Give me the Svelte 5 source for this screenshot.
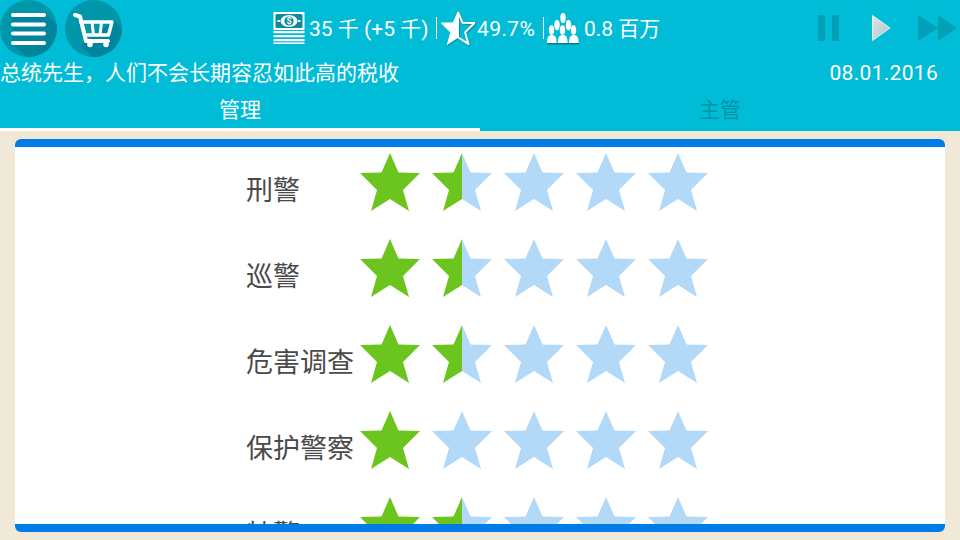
<script>
  const rows = [
    { name: '刑警', v: [2, 1, 0, 0, 0] },
    { name: '巡警', v: [2, 1, 0, 0, 0] },
    { name: '危害调查', v: [2, 1, 0, 0, 0] },
    { name: '保护警察', v: [2, 0, 0, 0, 0] },
    { name: '特警', v: [2, 1, 0, 0, 0] }
  ];
  const leftHalf = '30,0 21.5,19.500 0,20 17,37 11,58 30,46';
  const rightHalf = '30,0 38.5,19.500 60,20 43,37 49,58 30,46';
  const green = '#6CC51F';
  const blue = '#B3D9F9';
</script>

<div class="page">
  <header class="top">
    <div class="bar">
      <div class="round">
        <svg width="57" height="57" viewBox="0 0 57 57" aria-label="菜单">
          <defs><clipPath id="c1"><circle cx="28.5" cy="28.5" r="28.5" /></clipPath></defs>
          <circle cx="28.5" cy="28.5" r="28.5" fill="#0097AB" />
          <polygon clip-path="url(#c1)" points="12,17 45,13 70,38 70,70 40,70 12,44" fill="#00859B" />
          <g fill="#fff">
            <rect x="11" y="13" width="35" height="4" rx="2" />
            <rect x="11" y="22.500" width="35" height="4" rx="2" />
            <rect x="11" y="31.500" width="35" height="4" rx="2" />
            <rect x="11" y="41" width="35" height="4" rx="2" />
          </g>
        </svg>
        <svg width="57" height="57" viewBox="0 0 57 57" aria-label="商店">
          <defs><clipPath id="c2"><circle cx="28.5" cy="28.5" r="28.5" /></clipPath></defs>
          <circle cx="28.5" cy="28.5" r="28.5" fill="#0097AB" />
          <polygon clip-path="url(#c2)" points="20,42 49,21 75,45 60,70 40,70 16,46" fill="#00859B" />
          <path d="M10 15l5 1.500 6 24.500h22" fill="none" stroke="#fff" stroke-width="4" stroke-linecap="round" stroke-linejoin="round" />
          <path d="M16 22h31l-3.500 13H20z" fill="none" stroke="#fff" stroke-width="3.400" stroke-linejoin="round" />
          <path d="M27 22l1.500 13M36.500 22l-1.500 13" stroke="#fff" stroke-width="3" />
          <circle cx="25" cy="44.500" r="2.800" fill="#fff" />
          <circle cx="41" cy="44.500" r="2.800" fill="#fff" />
        </svg>
      </div>

      <div class="stats">
        <svg class="money" width="32" height="32" viewBox="0 0 32 32" aria-hidden="true">
          <rect x="0.5" y="0" width="31" height="18" fill="#fff" />
          <rect x="2.5" y="2" width="27" height="14" rx="1.500" fill="#0A8C9E" />
          <ellipse cx="16" cy="9" rx="8.500" ry="6" fill="#fff" />
          <circle cx="16" cy="9" r="4.600" fill="#0A8C9E" />
          <rect x="4.500" y="8" width="2.500" height="2" fill="#fff" />
          <rect x="25" y="8" width="2.500" height="2" fill="#fff" />
          <text x="16" y="12" text-anchor="middle" class="dollar">$</text>
          <g fill="#fff">
            <rect x="0.5" y="19" width="31" height="2.200" />
            <rect x="0.5" y="23" width="31" height="2.200" />
            <rect x="0.5" y="27" width="31" height="2.200" />
            <rect x="0.5" y="30.400" width="31" height="1.600" />
          </g>
        </svg>
        <span class="stat s1">35 千 (+5 千)</span>
        <i class="sep"></i>
        <svg class="approve" width="34" height="34" viewBox="-1 -1 62 60" aria-hidden="true">
          <polygon points={leftHalf} fill="#fff" />
          <polygon points={rightHalf} fill="none" stroke="#fff" stroke-width="3.600" stroke-linejoin="miter" />
          <polygon points={leftHalf} fill="none" stroke="#fff" stroke-width="2" />
        </svg>
        <span class="stat s2">49.7%</span>
        <i class="sep"></i>
        <svg class="people" width="33" height="32" viewBox="0 0 33 32" aria-hidden="true">
          <g fill="#fff">
            <ellipse cx="16" cy="5" rx="2.700" ry="5" />
            <ellipse cx="10" cy="12" rx="2.700" ry="5.300" />
            <ellipse cx="21.500" cy="12" rx="2.700" ry="5.300" />
            <ellipse cx="4.500" cy="17" rx="2.700" ry="4.800" />
            <ellipse cx="15.500" cy="17" rx="2.700" ry="4.800" />
            <ellipse cx="26.500" cy="17" rx="2.700" ry="4.800" />
            <path d="M0 30c0-6 1.500-8 4.800-8s4.800 2 4.800 8z" />
            <path d="M11 30c0-6 1.500-8 4.800-8s4.800 2 4.800 8z" />
            <path d="M22 30c0-6 1.500-8 4.800-8s4.800 2 4.800 8z" />
          </g>
          <rect x="0" y="30" width="32" height="1.500" fill="#067C8E" />
        </svg>
        <span class="stat s3">0.8 百万</span>
      </div>

      <div class="speed">
        <svg width="22" height="26" viewBox="0 0 22 26" aria-label="暂停">
          <rect width="7" height="26" fill="#00A0B6" />
          <rect x="14" width="7" height="26" fill="#00A0B6" />
        </svg>
        <svg width="19" height="26" viewBox="0 0 19 26" aria-label="播放">
          <defs>
            <linearGradient id="pl" x1="0" y1="0" x2="1" y2="1">
              <stop offset="0" stop-color="#DDE7E9" />
              <stop offset="1" stop-color="#A9C4C9" />
            </linearGradient>
          </defs>
          <polygon points="0.500,0.500 18,13 0.500,25.500" fill="url(#pl)" stroke="#fff" stroke-width="0.800" />
        </svg>
        <svg class="fast" width="39" height="26" viewBox="0 0 39 26" aria-label="快进">
          <polygon points="0,0 20,13 0,26" fill="#00A0B6" />
          <polygon points="20,0 39,13 20,26" fill="#00A0B6" />
        </svg>
      </div>
    </div>

    <div class="notice">
      <span>总统先生，人们不会长期容忍如此高的税收</span>
      <span class="date">08.01.2016</span>
    </div>

    <nav class="tabs">
      <div class="tab active">管理</div>
      <div class="tab">主管</div>
    </nav>
  </header>

  <main class="card">
    <div class="list">
      {#each rows as row}
        <div class="row">
          <div class="label">{row.name}</div>
          <div class="stars">
            {#each row.v as s}
              <svg width="60" height="58" viewBox="0 0 60 58" aria-hidden="true">
                <polygon points={leftHalf} fill={s >= 1 ? green : blue} />
                <polygon points={rightHalf} fill={s >= 2 ? green : blue} />
              </svg>
            {/each}
          </div>
        </div>
      {/each}
    </div>
  </main>
</div>

<style>
  :global(body) {
    margin: 0;
    background: #f0e9d8;
  }
  .page {
    width: 960px;
    height: 540px;
    overflow: hidden;
    display: flex;
    flex-direction: column;
    background: #f0e9d8;
    font-family: Roboto, "Noto Sans CJK SC", sans-serif;
    color: #fff;
  }
  .top {
    height: 131px;
    flex: none;
    background: #00bcd6;
    display: flex;
    flex-direction: column;
  }
  .bar {
    height: 57px;
    flex: none;
    display: flex;
  }
  .round {
    width: 273px;
    flex: none;
    display: flex;
    gap: 8px;
    align-items: flex-start;
  }
  .round svg,
  .stats svg,
  .speed svg {
    display: block;
    flex: none;
  }
  .stats {
    width: 540px;
    flex: none;
    display: flex;
    align-items: center;
    height: 56px;
    font-size: 21px;
    line-height: 1;
    white-space: nowrap;
  }
  .dollar {
    font-size: 9px;
    font-weight: 700;
    fill: #fff;
  }
  .stat {
    display: block;
    padding-top: 3px;
  }
  .s1 {
    margin-left: 4px;
    width: 127px;
  }
  .s2 {
    margin-left: 2px;
    width: 66px;
    letter-spacing: 0.4px;
  }
  .s3 {
    margin-left: 4px;
  }
  .sep {
    display: block;
    width: 1px;
    height: 22px;
    background: #fff;
    flex: none;
  }
  .approve {
    margin-left: 4px;
    filter: drop-shadow(1px 1px 0 #0a8c9e);
  }
  .people {
    margin-left: 3px;
    margin-top: 2px;
  }
  .speed {
    flex: 1;
    display: flex;
    align-items: center;
    height: 56px;
    padding-left: 5px;
    gap: 32px;
  }
  .speed .fast {
    margin-left: -5px;
  }
  .notice {
    height: 31px;
    box-sizing: border-box;
    padding-top: 2px;
    flex: none;
    display: flex;
    justify-content: space-between;
    align-items: center;
    padding-right: 22px;
    font-size: 21px;
    line-height: 29px;
    white-space: nowrap;
  }
  .date {
    letter-spacing: 0.3px;
  }
  .tabs {
    flex: 1;
    display: flex;
  }
  .tab {
    width: 480px;
    height: 43px;
    box-sizing: border-box;
    text-align: center;
    font-size: 21px;
    line-height: 44px;
    color: #0093A6;
  }
  .tab.active {
    color: #fff;
    border-bottom: 3px solid #fff;
  }
  .card {
    margin: 8px 15px 8px;
    flex: 1;
    min-height: 0;
    box-sizing: border-box;
    background: #fff;
    border-top: 8px solid #007ce8;
    border-bottom: 8px solid #007ce8;
    border-radius: 6px;
    overflow: hidden;
  }
  .list {
    height: 100%;
    overflow: hidden;
    padding-left: 231px;
  }
  .row {
    height: 86px;
    display: flex;
    align-items: center;
  }
  .label {
    width: 114px;
    flex: none;
    padding-top: 2px;
    font-size: 27px;
    line-height: 36px;
    color: #4a4a4a;
    white-space: nowrap;
  }
  .stars {
    display: flex;
    gap: 12px;
    align-self: flex-start;
    padding-top: 6px;
  }
  .stars svg {
    display: block;
  }
</style>
